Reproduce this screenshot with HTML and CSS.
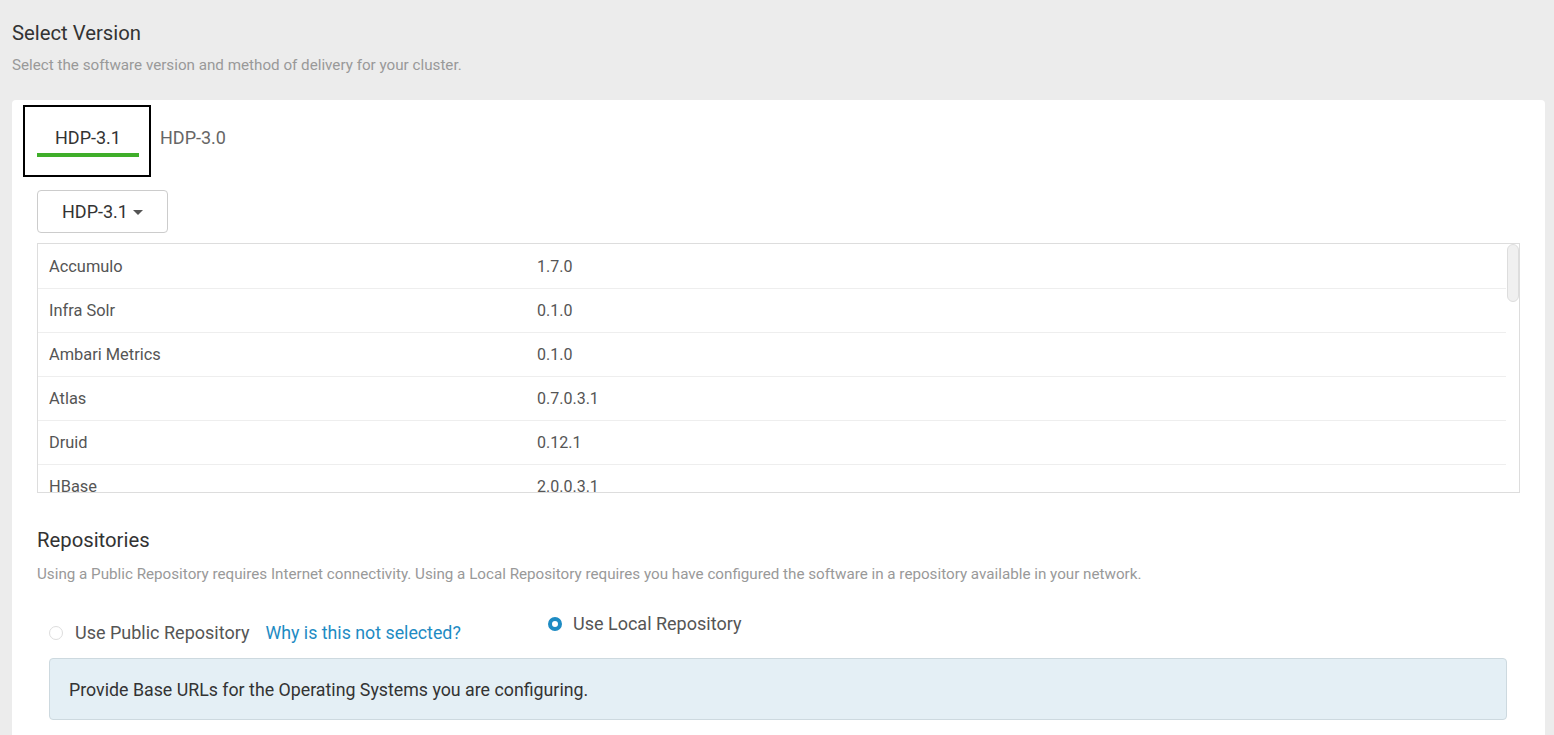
FILE: index.html
```html
<!DOCTYPE html>
<html>
<head>
<meta charset="utf-8">
<link rel="stylesheet" href="styles.css">
</head>
<body>
<div class="page">
  <h2 class="title">Select Version</h2>
  <p class="subtitle">Select the software version and method of delivery for your cluster.</p>
  <div class="card">
    <div class="tabs">
      <div class="tab active"><span>HDP-3.1</span></div>
      <div class="tab"><span>HDP-3.0</span></div>
    </div>
    <div class="dropdown-row">
      <button class="dropdown">HDP-3.1 <span class="caret"></span></button>
    </div>
    <div class="stack-box">
      <div class="stack">
        <div class="row"><span class="name">Accumulo</span><span>1.7.0</span></div>
        <div class="row"><span class="name">Infra Solr</span><span>0.1.0</span></div>
        <div class="row"><span class="name">Ambari Metrics</span><span>0.1.0</span></div>
        <div class="row"><span class="name">Atlas</span><span>0.7.0.3.1</span></div>
        <div class="row"><span class="name">Druid</span><span>0.12.1</span></div>
        <div class="row"><span class="name">HBase</span><span>2.0.0.3.1</span></div>
        <div class="row"><span class="name">HDFS</span><span>3.1.1.3.1</span></div>
        <div class="row"><span class="name">Hive</span><span>3.0.0.3.1</span></div>
        <div class="row"><span class="name">Kafka</span><span>1.0.1.3.1</span></div>
        <div class="row"><span class="name">Knox</span><span>0.5.0.3.1</span></div>
        <div class="row"><span class="name">Log Search</span><span>0.5.0</span></div>
        <div class="row"><span class="name">MapReduce2</span><span>3.0.0.3.1</span></div>
      </div>
      <div class="scrolltrack"><div class="thumb"></div></div>
    </div>
    <div class="repos">
      <h3 class="repos-title">Repositories</h3>
      <p class="repos-desc">Using a Public Repository requires Internet connectivity. Using a Local Repository requires you have configured the software in a repository available in your network.</p>
      <div class="radio-row">
        <div class="radio-opt public">
          <span class="radio"></span>
          <span class="radio-label">Use Public Repository</span>
          <a class="why" href="#">Why is this not selected?</a>
        </div>
        <div class="radio-opt local">
          <span class="radio checked"></span>
          <span class="radio-label">Use Local Repository</span>
        </div>
      </div>
      <div class="alert">Provide Base URLs for the Operating Systems you are configuring.</div>
    </div>
  </div>
</div>
</body>
</html>
```

FILE: styles.css
```css
html, body {
  margin: 0;
  padding: 0;
  background: #ececec;
  font-family: Roboto, "Liberation Sans", sans-serif;
  color: #333;
  overflow: hidden;
  height: 735px;
}
.page {
  padding: 0 9px 0 12px;
  height: 735px;
  overflow: hidden;
}
.title {
  margin: 0;
  padding-top: 21px;
  font-size: 20.3px;
  font-weight: 400;
  line-height: 24px;
  color: #333;
}
.subtitle {
  margin: 11px 0 0;
  font-size: 15.2px;
  line-height: 18px;
  color: #999;
}
.card {
  margin-top: 26px;
  background: #fff;
  border-radius: 4px;
  padding: 5px 25px 0 11px;
  height: 680px;
}
.tabs {
  display: flex;
  align-items: flex-start;
}
.tab {
  font-size: 18px;
  line-height: 22px;
  color: #666;
  height: 72px;
  padding: 22px 9px 0;
  box-sizing: border-box;
}
.tab.active {
  border: 2px solid #000;
  padding: 20px 12px 0;
  width: 128px;
  color: #333;
}
.tab.active span {
  display: block;
  width: 102px;
  text-align: center;
  padding-bottom: 4px;
  border-bottom: 4px solid #3fae2a;
}
.dropdown-row {
  padding: 13px 0 0 14px;
}
.dropdown {
  font-family: Roboto, "Liberation Sans", sans-serif;
  font-size: 18px;
  color: #333;
  background: #fff;
  border: 1px solid #ccc;
  border-radius: 4px;
  height: 43px;
  width: 131px;
  padding: 0;
  display: flex;
  align-items: center;
  justify-content: center;
  gap: 5px;
}
.caret {
  display: inline-block;
  width: 0;
  height: 0;
  border-left: 5px solid transparent;
  border-right: 5px solid transparent;
  border-top: 5px solid #555;
  margin-top: 2px;
}
.stack-box {
  margin: 10px 0 0 14px;
  border: 1px solid #ddd;
  height: 248px;
  display: flex;
  overflow: hidden;
}
.stack {
  flex: 1;
  padding-top: 1px;
  overflow: hidden;
  font-size: 16.4px;
  color: #555;
}
.row {
  display: flex;
  align-items: center;
  height: 43px;
  border-bottom: 1px solid #eee;
  padding-left: 11px;
}
.row .name {
  width: 488px;
  flex: none;
}
.row span:last-child {
  font-size: 16px;
}
.scrolltrack {
  width: 13px;
  flex: none;
}
.thumb {
  height: 56px;
  margin: 0 0 0 1px;
  background: #f0f0f0;
  border: 1px solid #ddd;
  border-radius: 6px;
}
.repos {
  padding-left: 14px;
}
.repos-title {
  margin: 36px 0 0;
  font-size: 20.3px;
  font-weight: 400;
  line-height: 22px;
  color: #333;
}
.repos-desc {
  margin: 14px 0 0;
  font-size: 15.2px;
  line-height: 18px;
  color: #999;
}
.radio-row {
  display: flex;
  align-items: flex-start;
  padding: 30px 0 0 12px;
}
.radio-opt {
  display: flex;
  align-items: center;
  font-size: 18px;
  color: #555;
}
.radio-opt.public {
  width: 499px;
  margin-top: 9px;
}
.radio {
  display: inline-block;
  width: 14px;
  height: 14px;
  box-sizing: border-box;
  border: 1px solid #ddd;
  border-radius: 50%;
  margin-right: 12px;
}
.radio.checked {
  border: 4px solid #1e8bc3;
  margin-right: 11px;
}
.why {
  color: #1e8bc3;
  text-decoration: none;
  margin-left: 16px;
  font-size: 17.8px;
}
.alert {
  margin: 15px 13px 0 12px;
  background: #e4eff5;
  border: 1px solid #cdd9df;
  border-radius: 4px;
  height: 60px;
  display: flex;
  align-items: center;
  padding-left: 19px;
  font-size: 17.8px;
  color: #333;
}
```
